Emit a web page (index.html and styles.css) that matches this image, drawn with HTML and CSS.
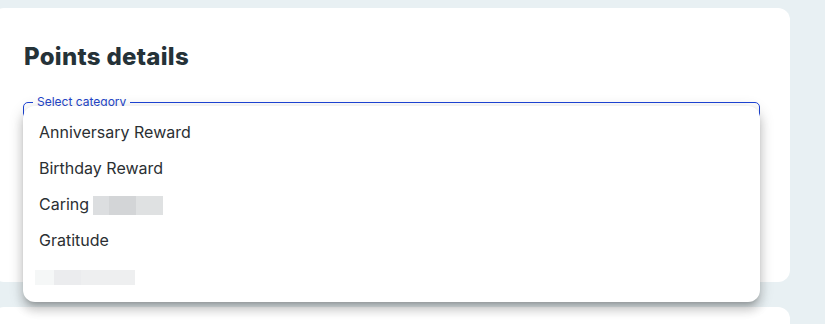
FILE: index.html
```html
<!DOCTYPE html>
<html>
<head>
<meta charset="utf-8">
<link rel="stylesheet" href="styles.css">
</head>
<body>
<div class="page">
  <section class="card">
    <h2 class="title">Points details</h2>
    <div class="field">
      <fieldset class="outline"><legend class="legend">Select category</legend></fieldset>
      <ul class="menu">
        <li class="item">Anniversary Reward</li>
        <li class="item">Birthday Reward</li>
        <li class="item">Caring <span class="blur b1"><i class="s1"></i><i class="s2"></i><i class="s3"></i></span></li>
        <li class="item">Gratitude</li>
        <li class="item"><span class="blur b2"><i class="s4"></i><i class="s5"></i><i class="s6"></i></span></li>
      </ul>
    </div>
  </section>
  <section class="card card2"></section>
</div>
</body>
</html>
```
FILE: styles.css
```css
html, body { margin: 0; padding: 0; }
body {
  background: #e8f0f3;
  font-family: Inter, "Noto Sans", sans-serif;
  width: 825px;
  height: 324px;
  overflow: hidden;
}
.page {
  padding-top: 8px;
  margin-left: -8px;
  width: 798px;
  display: flex;
  flex-direction: column;
  gap: 25px;
}
.card {
  background: #fff;
  border-radius: 12px;
  height: 274px;
  padding: 0 0 0 32px;
  box-sizing: border-box;
  position: relative;
}
.card2 { height: 17px; border-radius: 12px 12px 0 0; }
.title {
  margin: 0;
  padding-top: 35px;
  font-family: Inter, sans-serif;
  font-weight: 800;
  font-size: 24px;
  line-height: 28px;
  color: #253238;
  letter-spacing: 0.3px;
}
.field {
  position: relative;
  margin-top: 31px;
  margin-left: -1px;
  width: 737px;
  height: 56px;
}
.outline {
  margin: 0;
  position: absolute;
  inset: -6px 0 0 0;
  border: 1.5px solid #1d44d6;
  border-radius: 5px;
  padding: 0 9px;
}
.legend {
  padding: 0 4px;
  font-size: 12px;
  line-height: 12px;
  color: #2446c9;
  margin-left: 0;
}
.menu {
  position: absolute;
  left: 0;
  top: 4px;
  width: 737px;
  margin: 0;
  padding: 8px 0;
  list-style: none;
  background: #fff;
  border-radius: 12px;
  box-shadow: 0 5px 5px -3px rgba(0,0,0,0.2), 0 8px 10px 1px rgba(0,0,0,0.14), 0 3px 14px 2px rgba(0,0,0,0.12);
  z-index: 2;
}
.item {
  height: 36px;
  display: flex;
  align-items: center;
  padding-left: 16px;
  font-size: 16px;
  color: #2b2f33;
}
.blur { display: flex; margin-left: 4px; }
.blur i { display: block; }
.b1 i { height: 19px; }
.b1 { margin-top: 2px; }
.s1 { width: 16px; background: #dcdee0; }
.s2 { width: 27px; background: #d3d5d7; }
.s3 { width: 27px; background: #dfe1e2; }
.b2 { margin-left: -4px; margin-top: 3px; }
.b2 i { height: 15px; }
.s4 { width: 19px; background: #f5f7f7; }
.s5 { width: 27px; background: #ebecee; }
.s6 { width: 54px; background: #eeeff0; }
```
